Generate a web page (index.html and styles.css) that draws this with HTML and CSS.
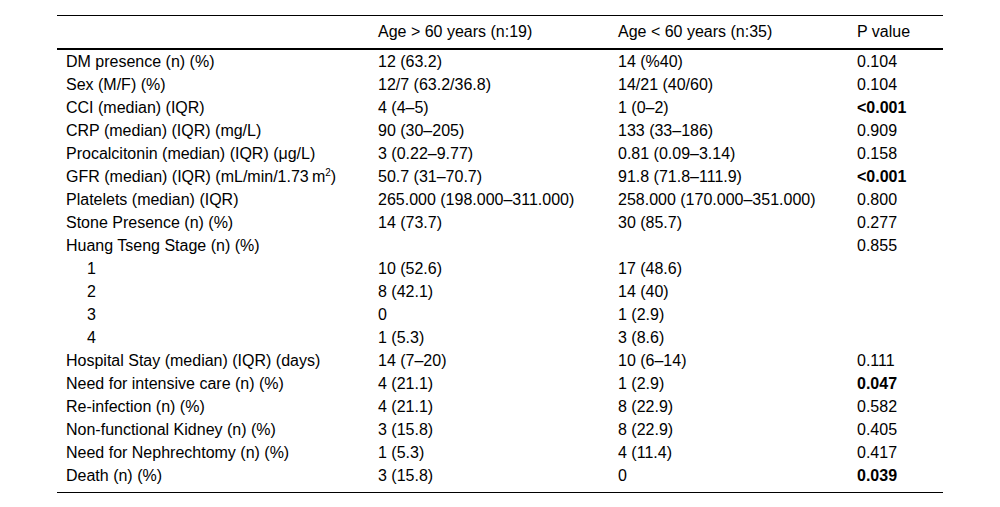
FILE: index.html
```html
<!DOCTYPE html>
<html lang="en">
<head>
<meta charset="utf-8">
<title>Table</title>
<link rel="stylesheet" href="styles.css">
</head>
<body>
<div class="page">
<table class="data">
<thead>
<tr><th class="c1"></th><th class="c2">Age &gt; 60 years (n:19)</th><th class="c3">Age &lt; 60 years (n:35)</th><th class="c4">P value</th></tr>
</thead>
<tbody>
<tr><td>DM presence (n) (%)</td><td>12 (63.2)</td><td>14 (%40)</td><td>0.104</td></tr>
<tr><td>Sex (M/F) (%)</td><td>12/7 (63.2/36.8)</td><td>14/21 (40/60)</td><td>0.104</td></tr>
<tr><td>CCI (median) (IQR)</td><td>4 (4–5)</td><td>1 (0–2)</td><td><b>&lt;0.001</b></td></tr>
<tr><td>CRP (median) (IQR) (mg/L)</td><td>90 (30–205)</td><td>133 (33–186)</td><td>0.909</td></tr>
<tr><td>Procalcitonin (median) (IQR) (μg/L)</td><td>3 (0.22–9.77)</td><td>0.81 (0.09–3.14)</td><td>0.158</td></tr>
<tr><td>GFR (median) (IQR) (mL/min/1.73&#8201;m<sup>2</sup>)</td><td>50.7 (31–70.7)</td><td>91.8 (71.8–111.9)</td><td><b>&lt;0.001</b></td></tr>
<tr><td>Platelets (median) (IQR)</td><td>265.000 (198.000–311.000)</td><td>258.000 (170.000–351.000)</td><td>0.800</td></tr>
<tr><td>Stone Presence (n) (%)</td><td>14 (73.7)</td><td>30 (85.7)</td><td>0.277</td></tr>
<tr><td>Huang Tseng Stage (n) (%)</td><td></td><td></td><td>0.855</td></tr>
<tr><td class="ind">1</td><td>10 (52.6)</td><td>17 (48.6)</td><td></td></tr>
<tr><td class="ind">2</td><td>8 (42.1)</td><td>14 (40)</td><td></td></tr>
<tr><td class="ind">3</td><td>0</td><td>1 (2.9)</td><td></td></tr>
<tr><td class="ind">4</td><td>1 (5.3)</td><td>3 (8.6)</td><td></td></tr>
<tr><td>Hospital Stay (median) (IQR) (days)</td><td>14 (7–20)</td><td>10 (6–14)</td><td>0.111</td></tr>
<tr><td>Need for intensive care (n) (%)</td><td>4 (21.1)</td><td>1 (2.9)</td><td><b>0.047</b></td></tr>
<tr><td>Re-infection (n) (%)</td><td>4 (21.1)</td><td>8 (22.9)</td><td>0.582</td></tr>
<tr><td>Non-functional Kidney (n) (%)</td><td>3 (15.8)</td><td>8 (22.9)</td><td>0.405</td></tr>
<tr><td>Need for Nephrechtomy (n) (%)</td><td>1 (5.3)</td><td>4 (11.4)</td><td>0.417</td></tr>
<tr class="last"><td>Death (n) (%)</td><td>3 (15.8)</td><td>0</td><td><b>0.039</b></td></tr>
</tbody>
</table>
</div>
</body>
</html>
```
FILE: styles.css
```css
html, body {
  margin: 0;
  padding: 0;
  background: #fff;
}
.page {
  padding: 15px 0 0 57px;
}
.data {
  width: 886px;
  border-collapse: collapse;
  font-family: "Liberation Sans", Arial, sans-serif;
  font-size: 16px;
  color: #000;
  border-top: 1px solid #000;
  border-bottom: 1px solid #000;
  table-layout: fixed;
}
.data th,
.data td {
  box-sizing: border-box;
}
.data th {
  font-weight: normal;
  text-align: left;
  height: 33px;
  padding: 0 0 0 9px;
  vertical-align: middle;
  border-bottom: 2px solid #000;
}
.c1 { width: 312px; }
.c2 { width: 240px; }
.c3 { width: 239px; }
.c4 { width: 95px; }
.data td {
  height: 23px;
  padding: 0 0 0 9px;
  line-height: 23px;
  white-space: nowrap;
  vertical-align: middle;
}
.data td.ind {
  padding-left: 30px;
}
.data tr.last td {
  padding-bottom: 5px;
  height: 28px;
}
.data b {
  font-weight: bold;
}
sup {
  font-size: 10px;
  line-height: 0;
  vertical-align: 6px;
}
```
